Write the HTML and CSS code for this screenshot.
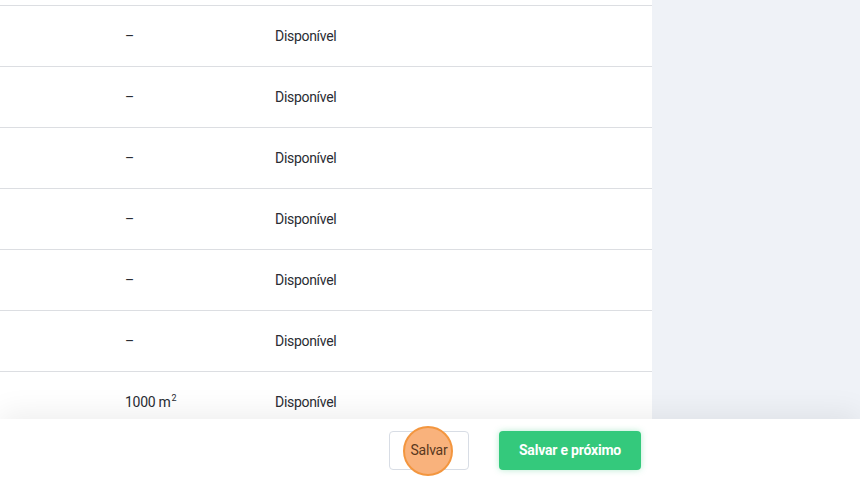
FILE: index.html
```html
<!DOCTYPE html>
<html lang="pt">
<head>
<meta charset="utf-8">
<link rel="stylesheet" href="styles.css">
</head>
<body>
<div class="page">
  <div class="main">
    <div class="table">
      <div class="top-gap"></div>
      <div class="row"><div class="cell">–</div><div class="cell">Disponível</div></div>
      <div class="row"><div class="cell">–</div><div class="cell">Disponível</div></div>
      <div class="row"><div class="cell">–</div><div class="cell">Disponível</div></div>
      <div class="row"><div class="cell">–</div><div class="cell">Disponível</div></div>
      <div class="row"><div class="cell">–</div><div class="cell">Disponível</div></div>
      <div class="row"><div class="cell">–</div><div class="cell">Disponível</div></div>
      <div class="row"><div class="cell">1000 m<sup>2</sup></div><div class="cell">Disponível</div></div>
    </div>
    <div class="aside"></div>
  </div>
  <div class="footer">
    <button class="btn btn-outline"><span class="highlight"></span><span class="label">Salvar</span></button>
    <button class="btn btn-primary">Salvar e próximo</button>
  </div>
</div>
</body>
</html>
```
FILE: styles.css
```css
* { box-sizing: border-box; }
html, body { margin: 0; padding: 0; }
body {
  width: 860px;
  height: 481px;
  overflow: hidden;
  background: #ffffff;
  font-family: "Roboto", "Liberation Sans", sans-serif;
  color: #2a2c33;
}
.page {
  position: relative;
  width: 860px;
  height: 481px;
  overflow: hidden;
}
.main {
  display: flex;
  height: 481px;
}
.table {
  width: 652px;
  background: #ffffff;
  display: flex;
  flex-direction: column;
}
.top-gap { height: 5px; flex: none; }
.row {
  flex: none;
  height: 61px;
  border-top: 1px solid #dcdee2;
  display: grid;
  grid-template-columns: 150px 1fr;
  padding-left: 125px;
  align-items: center;
  font-size: 14px;
  letter-spacing: -0.3px;
}
.row sup { font-size: 9px; vertical-align: 6px; line-height: 0; margin-left: 1px; }
.aside {
  flex: 1;
  background: #eff2f7;
}
.footer {
  position: absolute;
  left: 0;
  right: 0;
  bottom: 0;
  height: 62px;
  background: #ffffff;
  box-shadow: 0 -6px 30px rgba(0, 0, 0, 0.07);
  display: flex;
  align-items: center;
  justify-content: flex-end;
  gap: 30px;
  padding-right: 219px;
}
.btn {
  position: relative;
  height: 39px;
  border-radius: 4px;
  font-family: "Roboto", "Liberation Sans", sans-serif;
  font-size: 14px;
  letter-spacing: -0.2px;
  cursor: pointer;
  padding: 0;
}
.btn-outline {
  width: 80px;
  background: #ffffff;
  border: 1px solid #d8dde5;
  color: #5a3820;
}
.btn-outline .label { position: relative; }
.btn-primary {
  width: 142px;
  background: #34c97c;
  border: none;
  color: #ffffff;
  font-weight: 700;
  box-shadow: 0 0 6px rgba(52, 201, 124, 0.35);
}
.highlight {
  position: absolute;
  left: 13px;
  top: -6px;
  width: 50px;
  height: 50px;
  border-radius: 50%;
  background: #f9b27c;
  border: 2px solid #f3963f;
}
```
